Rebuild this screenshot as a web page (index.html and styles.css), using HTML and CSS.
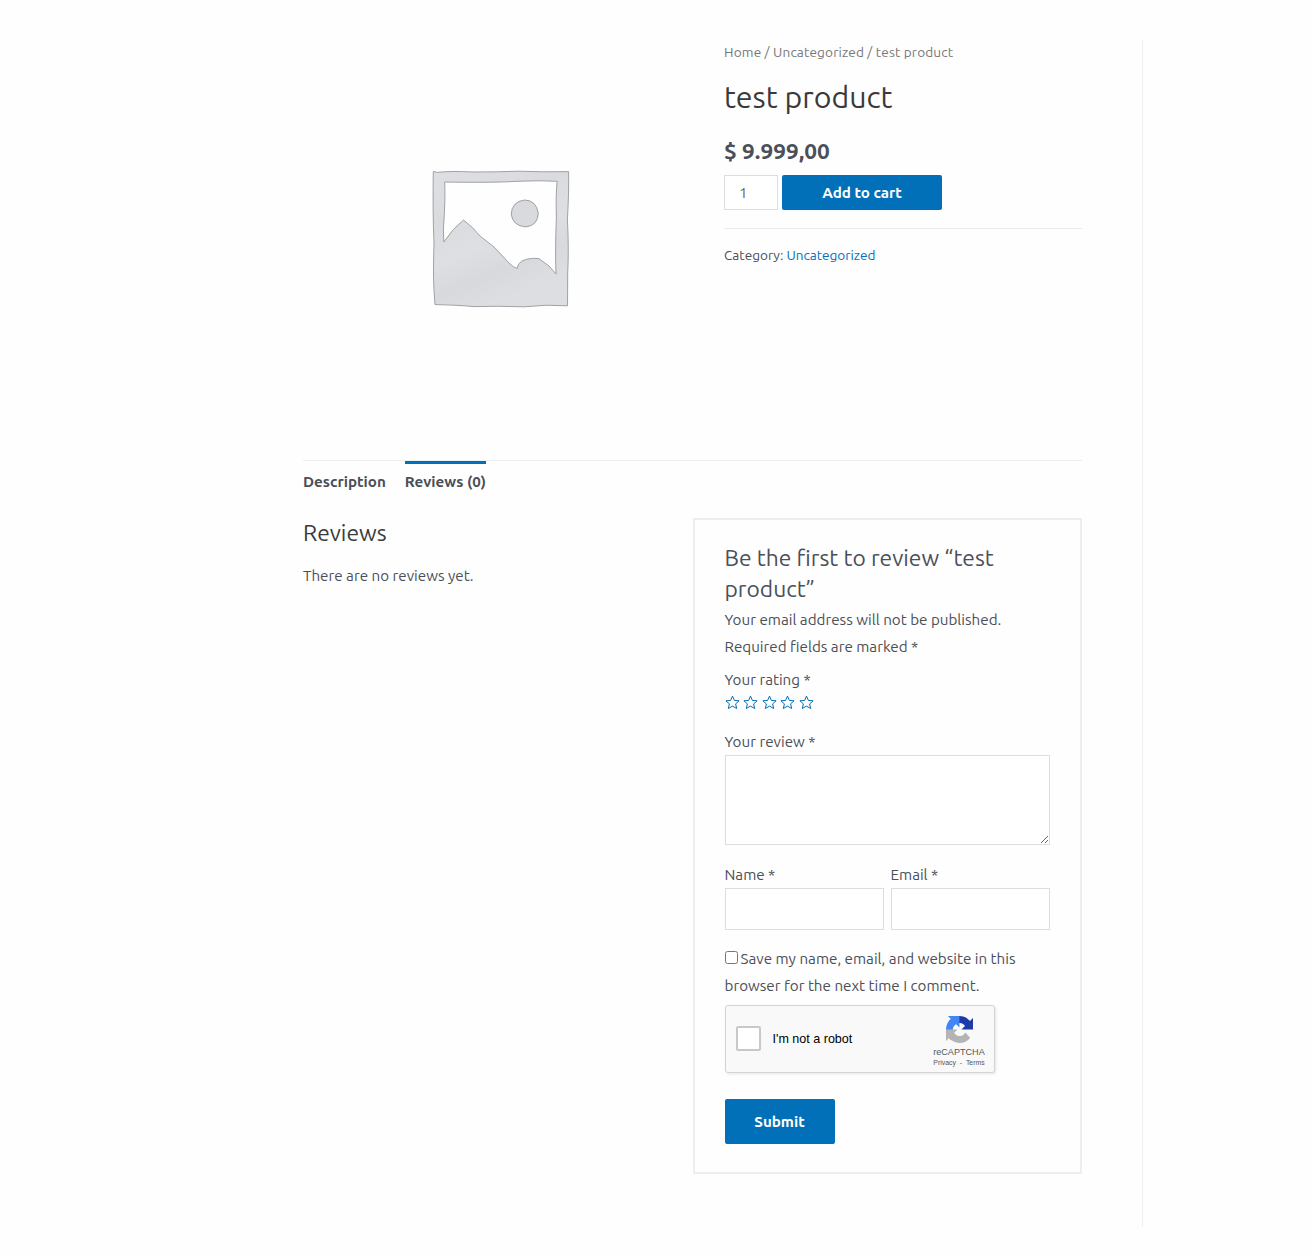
FILE: index.html
```html
<!DOCTYPE html>
<html lang="en">
<head>
<meta charset="utf-8">
<title>test product</title>
<link rel="stylesheet" href="styles.css">
</head>
<body>
<main class="primary">
  <section class="product">
    <div class="gallery">
      <svg class="placeholder" viewBox="0 0 160 160" width="160" height="160" aria-label="Product placeholder">
        <defs>
          <linearGradient id="shade" x1="0" y1="0" x2=".4" y2="1">
            <stop offset="0" stop-color="#dedfe3"/><stop offset=".35" stop-color="#dadbdf"/><stop offset=".6" stop-color="#dedfe3"/><stop offset=".8" stop-color="#d8d9dd"/><stop offset="1" stop-color="#dddee2"/>
          </linearGradient>
        </defs>
        <path fill="url(#shade)" stroke="#97989c" stroke-width=".9" stroke-linejoin="round" fill-rule="evenodd" d="M13.3 11.4 L17 12.4 Q31 10.8 53 12 Q78 12 98 11.2 Q124 12.2 148.6 11.6 Q149 32 147.4 60 Q149 89 147.7 113 L147.5 145.8 Q126 144.2 104 146.8 Q77 145.8 54 146.6 Q39 145.1 15 144.6 Q12.6 120 14 84 Q12.6 50 13.3 11.4 Z M24.7 22 Q25.6 39 23.4 69 L23.8 82 Q33 68 43.5 60 Q53 67 60 76 L74 87 L90 104 Q94 108 97.2 108.3 Q98 99 113.5 98.3 L119 98.7 L129 106 L136 114 Q135 91 136.4 57 Q135.6 35 137.2 21.3 Q121 20.3 100 21.2 Q73 22.9 24.7 22 Z"/>
        <path fill="#d9dade" stroke="#97989c" stroke-width=".9" d="M104.5 40 Q116 40 118.3 53 Q118 65.5 106 66.9 Q92.5 66 91.2 54 Q92 41.5 104.5 40 Z"/>
      </svg>
    </div>
    <div class="summary">
      <nav class="breadcrumb">Home / Uncategorized / test product</nav>
      <h1 class="title">test product</h1>
      <p class="price">$ 9.999,00</p>
      <form class="cart">
        <input class="qty" type="text" value="1" aria-label="Quantity">
        <button class="btn add" type="button">Add to cart</button>
      </form>
      <div class="meta">Category: <a class="link">Uncategorized</a></div>
    </div>
  </section>

  <ul class="tabs">
    <li class="tab">Description</li>
    <li class="tab active">Reviews (0)</li>
  </ul>

  <section class="reviews">
    <div class="comments">
      <h2 class="heading">Reviews</h2>
      <p class="none">There are no reviews yet.</p>
    </div>
    <form class="review-form">
      <h3 class="reply-title">Be the first to review “test<br>product”</h3>
      <p class="notes">Your email address will not be published.<br>Required fields are marked *</p>
      <div class="rating">
        <label class="label">Your rating *</label>
        <div class="stars">
          <svg class="star" viewBox="0 0 15 15"><path d="M7.5 1.1 L9.4 5.4 L14.1 5.8 L10.6 8.9 L11.7 13.5 L7.5 11.1 L3.3 13.5 L4.4 8.9 L.9 5.8 L5.6 5.4 Z"/></svg>
          <svg class="star" viewBox="0 0 15 15"><path d="M7.5 1.1 L9.4 5.4 L14.1 5.8 L10.6 8.9 L11.7 13.5 L7.5 11.1 L3.3 13.5 L4.4 8.9 L.9 5.8 L5.6 5.4 Z"/></svg>
          <svg class="star" viewBox="0 0 15 15"><path d="M7.5 1.1 L9.4 5.4 L14.1 5.8 L10.6 8.9 L11.7 13.5 L7.5 11.1 L3.3 13.5 L4.4 8.9 L.9 5.8 L5.6 5.4 Z"/></svg>
          <svg class="star" viewBox="0 0 15 15"><path d="M7.5 1.1 L9.4 5.4 L14.1 5.8 L10.6 8.9 L11.7 13.5 L7.5 11.1 L3.3 13.5 L4.4 8.9 L.9 5.8 L5.6 5.4 Z"/></svg>
          <svg class="star" viewBox="0 0 15 15"><path d="M7.5 1.1 L9.4 5.4 L14.1 5.8 L10.6 8.9 L11.7 13.5 L7.5 11.1 L3.3 13.5 L4.4 8.9 L.9 5.8 L5.6 5.4 Z"/></svg>
        </div>
      </div>
      <label class="label">Your review *</label>
      <textarea class="review-text" aria-label="Your review"></textarea>
      <div class="fields">
        <div class="field"><label class="label">Name *</label><input class="input" type="text" aria-label="Name"></div>
        <div class="field"><label class="label">Email *</label><input class="input" type="text" aria-label="Email"></div>
      </div>
      <p class="consent"><input class="check" type="checkbox" aria-label="Save details">Save my name, email, and website in this<br>browser for the next time I comment.</p>
      <div class="captcha">
        <span class="captcha-box"></span>
        <span class="captcha-text">I'm not a robot</span>
        <div class="captcha-brand">
          <svg class="captcha-logo" viewBox="0 0 64 64" width="27" height="27">
            <path fill="#1c3aa9" d="M64 31.955l-.033-1.37V4.687l-7.16 7.16C50.948 4.674 42.033.093 32.05.093c-10.4 0-19.622 4.96-25.458 12.64l11.736 11.86a15.55 15.55 0 0 1 4.754-5.334c2.05-1.6 4.952-2.906 8.968-2.906.485 0 .86.057 1.135.163 4.976.393 9.288 3.14 11.828 7.124l-8.307 8.307L64 31.953"/>
            <path fill="#4285f4" d="M31.862.094l-1.37.033H4.594l7.16 7.16C4.58 13.147 0 22.06 0 32.046c0 10.4 4.96 19.622 12.64 25.458L24.5 45.768a15.55 15.55 0 0 1-5.334-4.754c-1.6-2.05-2.906-4.952-2.906-8.968 0-.485.057-.86.163-1.135.393-4.976 3.14-9.288 7.124-11.828l8.307 8.307L31.86.095"/>
            <path fill="#b4b4b4" d="M.001 32.045l.033 1.37v25.898l7.16-7.16c5.86 7.173 14.774 11.754 24.76 11.754 10.4 0 19.622-4.96 25.458-12.64l-11.736-11.86a15.55 15.55 0 0 1-4.754 5.334c-2.05 1.6-4.952 2.906-8.968 2.906-.485 0-.86-.057-1.135-.163-4.976-.393-9.288-3.14-11.828-7.124l8.307-8.307c-10.522.04-22.4.066-27.295-.005"/>
          </svg>
          <span class="captcha-name">reCAPTCHA</span>
          <span class="captcha-links">Privacy&nbsp; - &nbsp;Terms</span>
        </div>
      </div>
      <button class="btn submit" type="button">Submit</button>
    </form>
  </section>
</main>
</body>
</html>
```
FILE: styles.css
```css
* { box-sizing: border-box; }
body {
  margin: 0;
  padding-top: 40px;
  height: 1257px;
  background: #fefefe;
  color: #4b4f58;
  font: 15.2px/27px Ubuntu, "Noto Sans", sans-serif;
}
h1, h2, h3, p, ul { margin: 0; padding: 0; font-weight: 400; }
.primary {
  width: 840px;
  height: 1187px;
  margin-left: 303px;
  padding-right: 60px;
  border-right: 1px solid #eee;
}
.product { display: flex; justify-content: space-between; height: 420px; }
.gallery { display: flex; align-items: flex-start; justify-content: center; width: 394px; padding-top: 120px; }
.placeholder { display: block; }
.summary { width: 358px; }
.breadcrumb { font-size: 13.6px; line-height: 24px; letter-spacing: .16px; color: #777; }
.title { margin-top: 13px; font-size: 30.3px; line-height: 40px; color: #3a3a3a; }
.price { margin-top: 19px; font-size: 22.6px; line-height: 30px; font-weight: 700; }
.cart { display: flex; gap: 4px; margin-top: 9px; padding-bottom: 18px; border-bottom: 1px solid #eaeaea; }
.qty, .input, .review-text { border: 1px solid #ddd; background: #fff; color: #666; font: inherit; border-radius: 0; }
.qty { width: 54px; height: 35px; padding: 0 14px; }
.btn { border: 0; border-radius: 2px; background: #0170b9; color: #fff; font: inherit; font-weight: 700; padding: 0; }
.add { width: 160px; height: 35px; }
.meta { margin-top: 14px; font-size: 13.6px; line-height: 24px; }
.link { color: #0170b9; }
.tabs { display: flex; gap: 19px; height: 58px; border-top: 1px solid #eee; list-style: none; font-weight: 700; }
.tab { height: 36px; padding-top: 7px; border-top: 0 solid #0170b9; }
.tab.active { padding-top: 4px; border-top-width: 3px; }
.reviews { display: flex; justify-content: space-between; }
.heading { font-size: 22.8px; line-height: 30px; color: #3a3a3a; }
.none { margin-top: 14px; }
.review-form { width: 389px; height: 656px; padding: 22px 30px 28px 29.5px; border: 2px solid #eee; }
.reply-title { font-size: 22.8px; line-height: 31px; }
.notes { margin-top: 2px; }
.rating { margin: 6px 0 14px; }
.label { display: block; }
.stars { display: flex; gap: 3.5px; height: 21px; padding-top: 2px; }
.star { width: 15px; height: 15px; fill: none; stroke: #0170b9; stroke-width: 1; }
.review-text { display: block; width: 325px; height: 90px; resize: vertical; }
.fields { display: flex; justify-content: space-between; margin: 16px 0 15px; width: 325px; }
.field { width: 159px; }
.input { display: block; width: 159px; height: 42px; }
.check { width: 13px; height: 13px; margin: 0 3px 0 0; vertical-align: 0; }
.captcha {
  display: flex; align-items: center;
  width: 270px; height: 68px; margin-top: 6px; padding-left: 10.5px;
  border: 1px solid #d3d3d3; border-radius: 3px; background: #f9f9f9;
  box-shadow: 1px 1px 3px rgba(0, 0, 0, .1);
  color: #000; font-family: "Liberation Sans", Arial, sans-serif; font-size: 12.55px; line-height: 15px;
}
.captcha-box { width: 25px; height: 25px; margin-bottom: 2px; border: 2px solid #c8c8c8; border-radius: 2px; background: #fff; }
.captcha-text { margin-left: 11.5px; }
.captcha-brand { display: flex; flex-direction: column; align-items: center; width: 62px; margin-left: auto; margin-right: 3.5px; padding-top: 4px; color: #555; }
.captcha-name { margin-top: 3px; font-size: 9.1px; line-height: 12px; }
.captcha-links { font-size: 6.9px; line-height: 9px; white-space: nowrap; }
.submit { display: block; width: 110px; height: 45px; margin-top: 26px; }
```
